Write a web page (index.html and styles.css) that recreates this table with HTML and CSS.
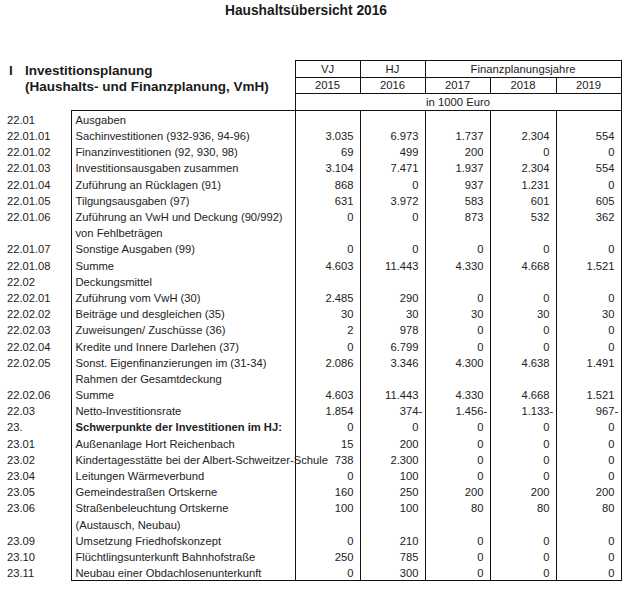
FILE: index.html
```html
<!DOCTYPE html>
<html lang="de">
<head>
<meta charset="utf-8">
<title>Haushaltsübersicht 2016</title>
<link rel="stylesheet" href="styles.css">
</head>
<body>
<main class="page">
  <h1 class="title">Haushaltsübersicht 2016</h1>
  <table class="sheet">
    <colgroup>
      <col class="c-code"><col class="c-label"><col class="c-n"><col class="c-n"><col class="c-n"><col class="c-n6"><col class="c-n">
    </colgroup>
    <thead>
      <tr class="h1">
        <th class="heading" colspan="2" rowspan="3">
          <div class="heading-in"><span class="roman">I</span><span class="heading-text">Investitionsplanung<br>(Haushalts- und Finanzplanung, VmH)</span></div>
        </th>
        <th class="hc">VJ</th><th class="hc">HJ</th><th class="hc" colspan="3">Finanzplanungsjahre</th>
      </tr>
      <tr class="h2"><th class="hc">2015</th><th class="hc">2016</th><th class="hc">2017</th><th class="hc">2018</th><th class="hc">2019</th></tr>
      <tr class="h3"><th class="hc" colspan="5">in 1000 Euro</th></tr>
    </thead>
    <tbody>
      <tr><td class="code">22.01</td><td class="label">Ausgaben</td><td class="n"></td><td class="n"></td><td class="n"></td><td class="n"></td><td class="n"></td></tr>
      <tr><td class="code">22.01.01</td><td class="label">Sachinvestitionen (932-936, 94-96)</td><td class="n">3.035</td><td class="n">6.973</td><td class="n">1.737</td><td class="n">2.304</td><td class="n">554</td></tr>
      <tr><td class="code">22.01.02</td><td class="label">Finanzinvestitionen (92, 930, 98)</td><td class="n">69</td><td class="n">499</td><td class="n">200</td><td class="n">0</td><td class="n">0</td></tr>
      <tr><td class="code">22.01.03</td><td class="label">Investitionsausgaben zusammen</td><td class="n">3.104</td><td class="n">7.471</td><td class="n">1.937</td><td class="n">2.304</td><td class="n">554</td></tr>
      <tr><td class="code">22.01.04</td><td class="label">Zuführung an Rücklagen (91)</td><td class="n">868</td><td class="n">0</td><td class="n">937</td><td class="n">1.231</td><td class="n">0</td></tr>
      <tr><td class="code">22.01.05</td><td class="label">Tilgungsausgaben (97)</td><td class="n">631</td><td class="n">3.972</td><td class="n">583</td><td class="n">601</td><td class="n">605</td></tr>
      <tr><td class="code">22.01.06</td><td class="label">Zuführung an VwH und Deckung (90/992)</td><td class="n">0</td><td class="n">0</td><td class="n">873</td><td class="n">532</td><td class="n">362</td></tr>
      <tr><td class="code"></td><td class="label">von Fehlbeträgen</td><td class="n"></td><td class="n"></td><td class="n"></td><td class="n"></td><td class="n"></td></tr>
      <tr><td class="code">22.01.07</td><td class="label">Sonstige Ausgaben (99)</td><td class="n">0</td><td class="n">0</td><td class="n">0</td><td class="n">0</td><td class="n">0</td></tr>
      <tr><td class="code">22.01.08</td><td class="label">Summe</td><td class="n">4.603</td><td class="n">11.443</td><td class="n">4.330</td><td class="n">4.668</td><td class="n">1.521</td></tr>
      <tr><td class="code">22.02</td><td class="label">Deckungsmittel</td><td class="n"></td><td class="n"></td><td class="n"></td><td class="n"></td><td class="n"></td></tr>
      <tr><td class="code">22.02.01</td><td class="label">Zuführung vom VwH (30)</td><td class="n">2.485</td><td class="n">290</td><td class="n">0</td><td class="n">0</td><td class="n">0</td></tr>
      <tr><td class="code">22.02.02</td><td class="label">Beiträge und desgleichen (35)</td><td class="n">30</td><td class="n">30</td><td class="n">30</td><td class="n">30</td><td class="n">30</td></tr>
      <tr><td class="code">22.02.03</td><td class="label">Zuweisungen/ Zuschüsse (36)</td><td class="n">2</td><td class="n">978</td><td class="n">0</td><td class="n">0</td><td class="n">0</td></tr>
      <tr><td class="code">22.02.04</td><td class="label">Kredite und Innere Darlehen (37)</td><td class="n">0</td><td class="n">6.799</td><td class="n">0</td><td class="n">0</td><td class="n">0</td></tr>
      <tr><td class="code">22.02.05</td><td class="label">Sonst. Eigenfinanzierungen im (31-34)</td><td class="n">2.086</td><td class="n">3.346</td><td class="n">4.300</td><td class="n">4.638</td><td class="n">1.491</td></tr>
      <tr><td class="code"></td><td class="label">Rahmen der Gesamtdeckung</td><td class="n"></td><td class="n"></td><td class="n"></td><td class="n"></td><td class="n"></td></tr>
      <tr><td class="code">22.02.06</td><td class="label">Summe</td><td class="n">4.603</td><td class="n">11.443</td><td class="n">4.330</td><td class="n">4.668</td><td class="n">1.521</td></tr>
      <tr><td class="code">22.03</td><td class="label">Netto-Investitionsrate</td><td class="n">1.854</td><td class="n">374<span class="neg">-</span></td><td class="n">1.456<span class="neg">-</span></td><td class="n">1.133<span class="neg">-</span></td><td class="n">967<span class="neg">-</span></td></tr>
      <tr class="strong"><td class="code">23.</td><td class="label">Schwerpunkte der Investitionen im HJ:</td><td class="n">0</td><td class="n">0</td><td class="n">0</td><td class="n">0</td><td class="n">0</td></tr>
      <tr><td class="code">23.01</td><td class="label">Außenanlage Hort Reichenbach</td><td class="n">15</td><td class="n">200</td><td class="n">0</td><td class="n">0</td><td class="n">0</td></tr>
      <tr><td class="code">23.02</td><td class="label">Kindertagesstätte bei der Albert-Schweitzer-Schule</td><td class="n">738</td><td class="n">2.300</td><td class="n">0</td><td class="n">0</td><td class="n">0</td></tr>
      <tr><td class="code">23.04</td><td class="label">Leitungen Wärmeverbund</td><td class="n">0</td><td class="n">100</td><td class="n">0</td><td class="n">0</td><td class="n">0</td></tr>
      <tr><td class="code">23.05</td><td class="label">Gemeindestraßen Ortskerne</td><td class="n">160</td><td class="n">250</td><td class="n">200</td><td class="n">200</td><td class="n">200</td></tr>
      <tr><td class="code">23.06</td><td class="label">Straßenbeleuchtung Ortskerne</td><td class="n">100</td><td class="n">100</td><td class="n">80</td><td class="n">80</td><td class="n">80</td></tr>
      <tr><td class="code"></td><td class="label">(Austausch, Neubau)</td><td class="n"></td><td class="n"></td><td class="n"></td><td class="n"></td><td class="n"></td></tr>
      <tr><td class="code">23.09</td><td class="label">Umsetzung Friedhofskonzept</td><td class="n">0</td><td class="n">210</td><td class="n">0</td><td class="n">0</td><td class="n">0</td></tr>
      <tr><td class="code">23.10</td><td class="label">Flüchtlingsunterkunft Bahnhofstraße</td><td class="n">250</td><td class="n">785</td><td class="n">0</td><td class="n">0</td><td class="n">0</td></tr>
      <tr><td class="code">23.11</td><td class="label">Neubau einer Obdachlosenunterkunft</td><td class="n">0</td><td class="n">300</td><td class="n">0</td><td class="n">0</td><td class="n">0</td></tr>
    </tbody>
  </table>
</main>
</body>
</html>
```
FILE: styles.css
```css
html, body {
  margin: 0;
  padding: 0;
  background: #ffffff;
}
body {
  font-family: "Liberation Sans", Arial, sans-serif;
  color: #222222;
}
.page {
  padding: 3px 0 0 7px;
  width: 633px;
}
.title {
  margin: 0;
  width: 598px;
  text-align: center;
  font-size: 13.75px;
  line-height: 16px;
  font-weight: bold;
  color: #1a1a1a;
}
.sheet {
  margin-top: 41px;
  border-collapse: collapse;
  table-layout: fixed;
  width: 614px;
  font-size: 11.2px;
}
col.c-code { width: 64px; }
col.c-label { width: 224px; }
col.c-n { width: 65px; }
col.c-n6 { width: 66px; }

.heading {
  padding: 2px 0 0 0;
  vertical-align: top;
  text-align: left;
  font-size: 13.5px;
  line-height: 16px;
  font-weight: bold;
  color: #1a1a1a;
}
.heading-in {
  display: flex;
}
.roman {
  box-sizing: border-box;
  width: 18px;
  padding-left: 2px;
  flex: none;
}
.heading-text {
  white-space: nowrap;
}
.hc {
  border: 1px solid #111111;
  padding: 0;
  font-weight: normal;
  text-align: center;
  font-size: 11.3px;
  line-height: 14px;
  vertical-align: bottom;
  padding-bottom: 1px;
}
tr.h1 { height: 17px; }
tr.h2 { height: 16px; }
tr.h3 { height: 17px; }

tbody tr { height: 16.2px; }
tbody td {
  padding: 2px 0 0 0;
  line-height: 14px;
  white-space: nowrap;
  vertical-align: middle;
}
td.code {
  text-align: left;
}
td.label {
  border-left: 1px solid #111111;
  padding-left: 4px;
  overflow: visible;
}
td.n {
  border-left: 1px solid #111111;
  border-right: 1px solid #111111;
  text-align: right;
  padding-right: 6px;
}
tbody tr:first-child td.label,
tbody tr:first-child td.n {
  border-top: 1px solid #111111;
}
tbody tr:last-child td.label,
tbody tr:last-child td.n {
  border-bottom: 1px solid #111111;
}
tr.strong td.label {
  font-weight: bold;
}
.neg {
  margin-right: -0.333em;
}
```
